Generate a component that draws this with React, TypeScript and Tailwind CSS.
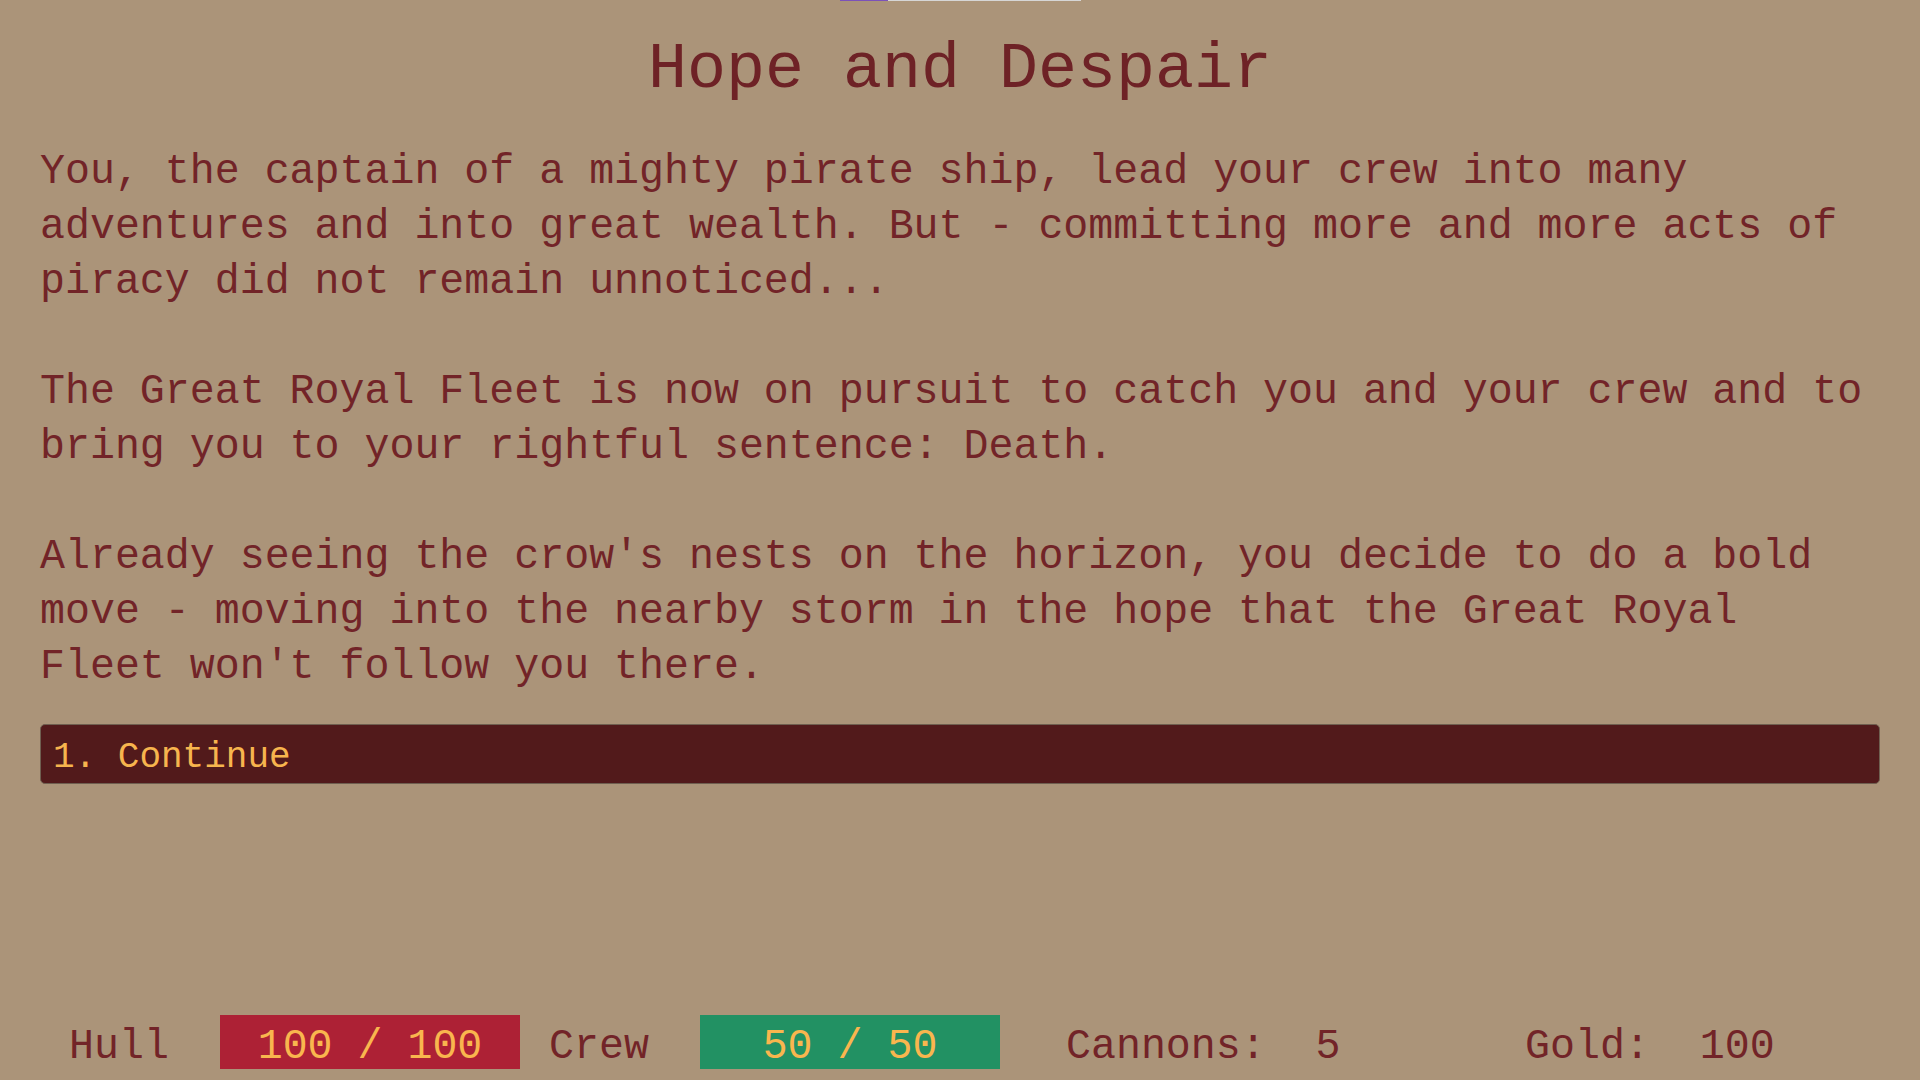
import React from "react";

const mono = { fontFamily: '"Liberation Mono", "DejaVu Sans Mono", monospace' };

export default function App() {
  return (
    <div
      className="min-h-screen w-full bg-[#ab9479] flex flex-col text-[#722428]"
      style={mono}
    >
      <div className="flex justify-center h-[1px]">
        <div className="w-[48px] h-[1px] bg-[#7b52b9]" />
        <div className="w-[193px] h-[1px] bg-[#d6d6d6]" />
      </div>

      <h1 className="mt-[31px] text-center text-[65px] leading-[76px] text-[#6e2226]">
        Hope and Despair
      </h1>

      <div className="mt-[36px] px-[40px] text-[41.6px] leading-[55px]">
        <p>
          You, the captain of a mighty pirate ship, lead your crew into many
          adventures and into great wealth. But - committing more and more acts
          of piracy did not remain unnoticed...
        </p>
        <p className="mt-[55px]">
          The Great Royal Fleet is now on pursuit to catch you and your crew and
          to bring you to your rightful sentence: Death.
        </p>
        <p className="mt-[55px]">
          Already seeing the crow's nests on the horizon, you decide to do a
          bold move - moving into the nearby storm in the hope that the Great
          Royal Fleet won't follow you there.
        </p>
      </div>

      <div className="mt-[30px] px-[40px]">
        <button
          className="w-full h-[60px] rounded-[5px] border border-[#6f5f50] bg-[#521a1b] text-left pl-[12px] pt-[10px] text-[36px] leading-[46px] text-[#f7b54e] flex items-start"
          style={mono}
        >
          1. Continue
        </button>
      </div>

      <div className="mt-auto mb-[11px] flex items-start text-[41.6px] leading-[44px] whitespace-pre">
        <div className="ml-[67px] w-[153px] h-[54px] pt-[10px] pl-[2px]">Hull</div>
        <div className="w-[300px] h-[54px] pt-[10px] bg-[#ad2135] text-center text-[#f9b64e]">
          100 / 100
        </div>
        <div className="ml-[27px] w-[153px] h-[54px] pt-[10px] pl-[2px]">Crew</div>
        <div className="w-[300px] h-[54px] pt-[10px] bg-[#229163] text-center text-[#f9b64e]">
          50 / 50
        </div>
        <div className="ml-[66px] w-[272px] h-[54px] pt-[10px]">Cannons:  5</div>
        <div className="ml-[187px] h-[54px] pt-[10px]">Gold:  100</div>
      </div>
    </div>
  );
}
